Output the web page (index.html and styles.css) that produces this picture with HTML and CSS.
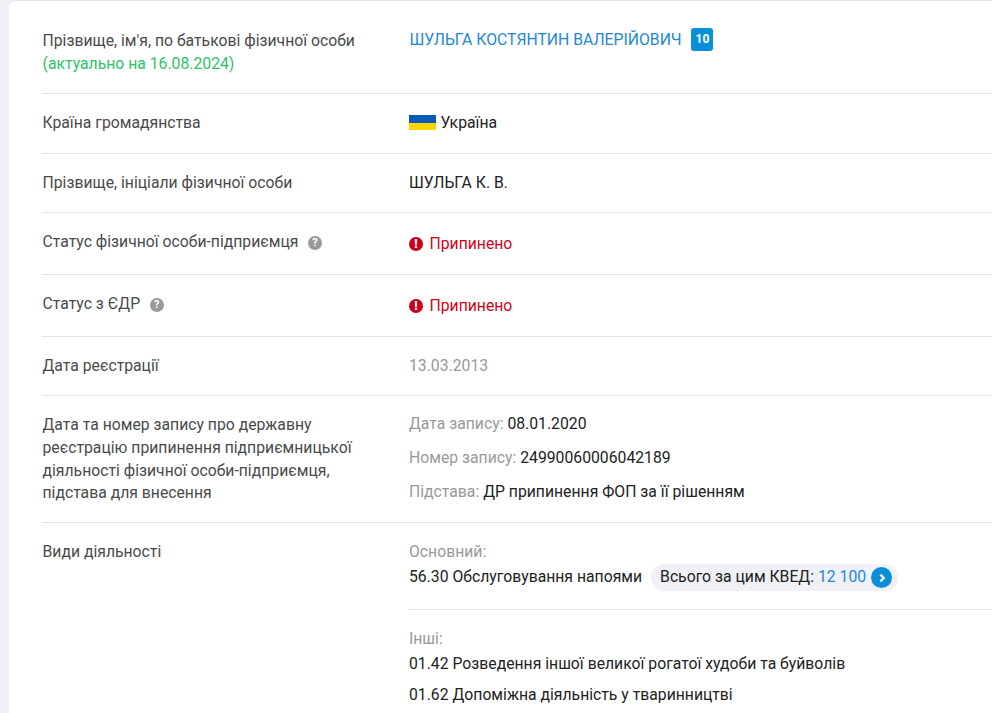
FILE: index.html
```html
<!DOCTYPE html>
<html lang="uk">
<head>
<meta charset="utf-8">
<title>ШУЛЬГА КОСТЯНТИН ВАЛЕРІЙОВИЧ</title>
<link rel="stylesheet" href="styles.css">
</head>
<body>
<main class="card">
  <section class="row row-name">
    <div class="label">Прізвище, ім'я, по батькові фізичної особи<br><span class="actual">(актуально на 16.08.2024)</span></div>
    <div class="value name"><a class="link">ШУЛЬГА КОСТЯНТИН ВАЛЕРІЙОВИЧ</a><span class="count">10</span></div>
  </section>
  <section class="row row-country">
    <div class="label">Країна громадянства</div>
    <div class="value country"><svg class="flag" width="27" height="15" viewBox="0 0 27 15"><rect width="27" height="8" fill="#0a5bb8"/><rect y="8" width="27" height="7" fill="#ffd500"/></svg>Україна</div>
  </section>
  <section class="row row-initials">
    <div class="label">Прізвище, ініціали фізичної особи</div>
    <div class="value">ШУЛЬГА К. В.</div>
  </section>
  <section class="row row-status">
    <div class="label">Статус фізичної особи-підприємця<span class="help">?</span></div>
    <div class="value stopped"><span class="alert">!</span>Припинено</div>
  </section>
  <section class="row row-status">
    <div class="label">Статус з ЄДР<span class="help">?</span></div>
    <div class="value stopped"><span class="alert">!</span>Припинено</div>
  </section>
  <section class="row row-date">
    <div class="label">Дата реєстрації</div>
    <div class="value muted">13.03.2013</div>
  </section>
  <section class="row row-record">
    <div class="label">Дата та номер запису про державну реєстрацію припинення підприємницької діяльності фізичної особи-підприємця, підстава для внесення</div>
    <div class="value records">
      <div><span class="muted">Дата запису:</span> 08.01.2020</div>
      <div><span class="muted">Номер запису:</span> 24990060006042189</div>
      <div><span class="muted">Підстава:</span> ДР припинення ФОП за її рішенням</div>
    </div>
  </section>
  <section class="row row-kved">
    <div class="label">Види діяльності</div>
    <div class="value kved">
      <div class="kved-main">
        <div class="muted">Основний:</div>
        <div class="kved-line">56.30 Обслуговування напоями
          <span class="pill">Всього за цим КВЕД:&nbsp;<span class="link">12 100</span><span class="go"><svg width="10" height="10" viewBox="0 0 10 10"><path d="M3.4 1.6 6.8 5 3.4 8.4" fill="none" stroke="#fff" stroke-width="2.2"/></svg></span></span>
        </div>
      </div>
      <div class="kved-other">
        <div class="muted">Інші:</div>
        <div class="other-item">01.42 Розведення іншої великої рогатої худоби та буйволів</div>
        <div class="other-item">01.62 Допоміжна діяльність у тваринництві</div>
      </div>
    </div>
  </section>
</main>
</body>
</html>
```
FILE: styles.css
```css
* { box-sizing: border-box; }
html, body { margin: 0; height: 713px; overflow: hidden; }
body {
  background: #f0f1f7;
  font-family: Roboto, "Liberation Sans", sans-serif;
  font-size: 15.75px;
  line-height: 22.75px;
  color: #222;
}
.card {
  margin-left: 9px;
  padding-left: 33px;
  height: 713px;
  background: #fff;
  border-top: 1px solid #e6e6e9;
  border-top-left-radius: 6px;
  overflow: hidden;
}
.row {
  display: grid;
  grid-template-columns: 367px 1fr;
  align-items: start;
  border-bottom: 1px solid #e4e4e4;
}
.label { color: #4a4a4a; padding-left: 0.5px; padding-right: 40px; }
.actual { color: #2ec26a; }
.link { color: #1e88d2; }
.muted { color: #999; }
.row-name { height: 93px; padding-top: 29px; }
.row-country { height: 60px; padding-top: 18px; }
.row-initials { height: 59px; padding-top: 18px; }
.row-status { height: 62px; padding-top: 17px; }
.row-status .label { margin-top: 1px; white-space: nowrap; }
.row-status .value { padding-top: 2px; }
.row-date { height: 59px; padding-top: 18px; }
.row-record { height: 127px; padding-top: 17px; }
.row-record .label { margin-top: 1px; }
.row-kved { border-bottom: 0; padding-top: 18px; }
.name { display: flex; align-items: flex-start; padding-left: 0.5px; }
.name .link { margin-top: -1px; }
.count {
  margin-left: 10px;
  margin-top: -2px;
  width: 22px;
  height: 23px;
  background: #0a8fd8;
  border-radius: 3px;
  color: #fff;
  font-size: 12px;
  font-weight: 700;
  line-height: 23px;
  text-align: center;
}
.country { display: flex; align-items: center; }
.flag { margin-right: 4.5px; margin-top: -1px; }
.help {
  display: inline-block;
  width: 14px;
  height: 14px;
  margin-left: 9.5px;
  border-radius: 50%;
  background: #999;
  color: #fff;
  font-size: 11px;
  font-weight: 700;
  line-height: 14px;
  text-align: center;
  vertical-align: 1.5px;
}
.stopped { color: #d0021b; display: flex; align-items: center; height: 26px; }
.alert {
  width: 14px;
  height: 14px;
  margin-right: 6.5px;
  border-radius: 50%;
  background: #c8001e;
  color: #fff;
  font-size: 12px;
  font-weight: 900;
  line-height: 14px;
  text-align: center;
}
.records div { margin-bottom: 11.25px; }
.kved-main { height: 69px; border-bottom: 1px solid #e4e4e4; }
.kved-line { display: flex; align-items: center; height: 28px; }
.pill {
  display: inline-flex;
  align-items: center;
  height: 27px;
  margin-left: 9px;
  padding: 0 6px 0 9px;
  border-radius: 14px;
  background: #f0f1f7;
}
.go {
  display: inline-flex;
  align-items: center;
  justify-content: center;
  width: 21px;
  height: 21px;
  margin-left: 5px;
  border-radius: 50%;
  background: #0a8fd8;
}
.kved-other { padding-top: 18px; }
.other-item { margin-top: 2px; margin-bottom: 8.5px; }
```
